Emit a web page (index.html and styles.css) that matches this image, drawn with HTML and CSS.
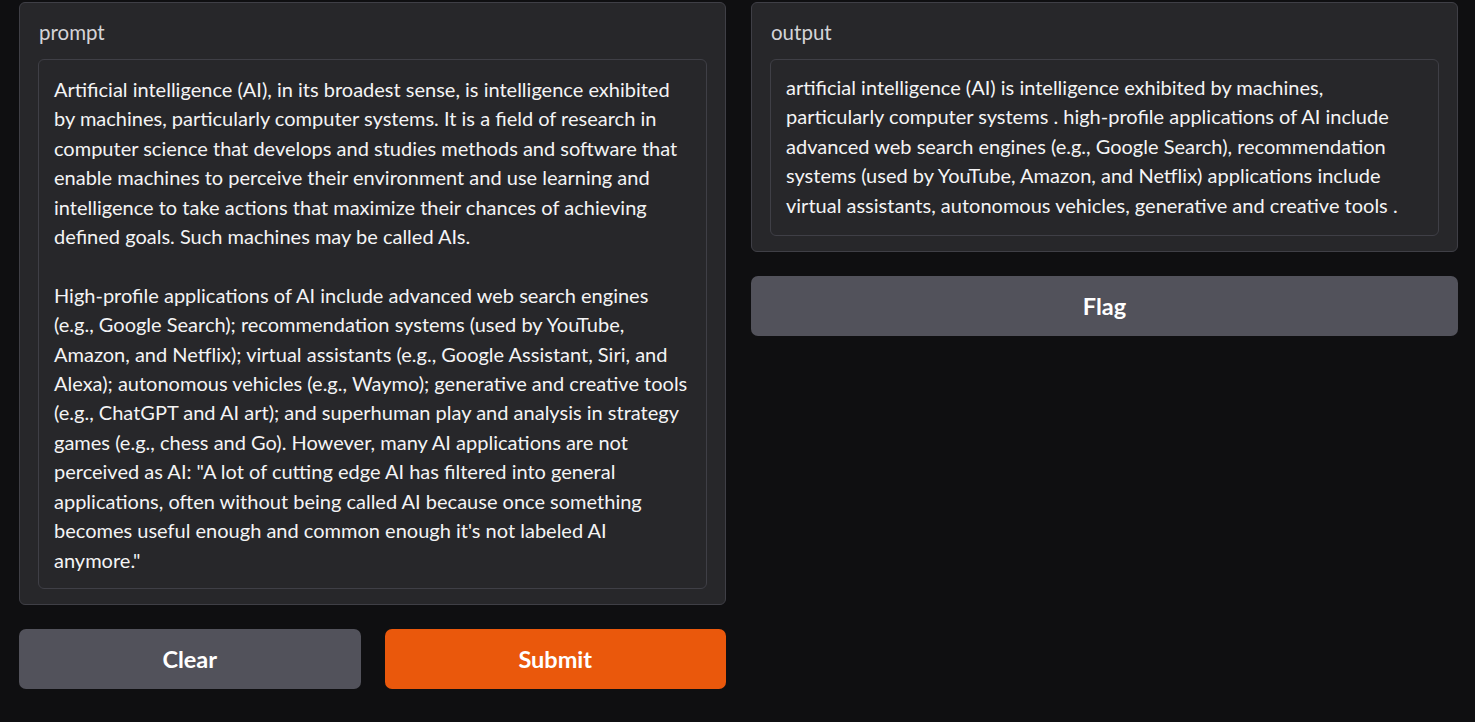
FILE: index.html
```html
<!DOCTYPE html>
<html lang="en">
<head>
<meta charset="utf-8">
<title>Gradio</title>
<link rel="stylesheet" href="styles.css">
</head>
<body>
<main class="app">
  <section class="col">
    <div class="block">
      <label class="label">prompt</label>
      <div class="textbox textbox-prompt">Artificial intelligence (AI), in its broadest sense, is intelligence exhibited
by machines, particularly computer systems. It is a field of research in
computer science that develops and studies methods and software that
enable machines to perceive their environment and use learning and
intelligence to take actions that maximize their chances of achieving
defined goals. Such machines may be called AIs.

High-profile applications of AI include advanced web search engines
(e.g., Google Search); recommendation systems (used by YouTube,
Amazon, and Netflix); virtual assistants (e.g., Google Assistant, Siri, and
Alexa); autonomous vehicles (e.g., Waymo); generative and creative tools
(e.g., ChatGPT and AI art); and superhuman play and analysis in strategy
games (e.g., chess and Go). However, many AI applications are not
perceived as AI: "A lot of cutting edge AI has filtered into general
applications, often without being called AI because once something
becomes useful enough and common enough it's not labeled AI
anymore."</div>
    </div>
    <div class="row">
      <button class="btn btn-secondary">Clear</button>
      <button class="btn btn-primary">Submit</button>
    </div>
  </section>
  <section class="col">
    <div class="block">
      <label class="label">output</label>
      <div class="textbox textbox-output">artificial intelligence (AI) is intelligence exhibited by machines,
particularly computer systems . high-profile applications of AI include
advanced web search engines (e.g., Google Search), recommendation
systems (used by YouTube, Amazon, and Netflix) applications include
virtual assistants, autonomous vehicles, generative and creative tools .</div>
    </div>
    <button class="btn btn-secondary">Flag</button>
  </section>
</main>
</body>
</html>
```

FILE: styles.css
```css
html, body {
  margin: 0;
  padding: 0;
  background: #0f0f11;
}
body {
  font-family: "Lato", "Open Sans", sans-serif;
  color: #f4f4f5;
}
.app {
  display: grid;
  grid-template-columns: 707px 707px;
  column-gap: 25px;
  padding: 2px 17px 0 19px;
  align-items: start;
}
.col {
  display: flex;
  flex-direction: column;
  gap: 24px;
}
.block {
  background: #27272a;
  border: 1px solid #3f3f46;
  border-radius: 6px;
  padding: 16px 18px 15px 18px;
  display: flex;
  flex-direction: column;
}
.label {
  font-size: 20.5px;
  line-height: 26px;
  color: #d4d4d8;
  margin-bottom: 14px;
  padding-left: 1px;
}
.textbox {
  background: #27272a;
  border: 1px solid #3f3f46;
  border-radius: 6px;
  font-size: 20px;
  line-height: 29.4px;
  white-space: pre-wrap;
  color: #f4f4f5;
}
.textbox-prompt {
  padding: 15px 15px 13px 15px;
}
.textbox-output {
  padding: 13px 15px 15px 15px;
}
.row {
  display: flex;
  gap: 24px;
}
.row .btn {
  flex: 1;
}
.btn {
  height: 60px;
  border: none;
  border-radius: 7px;
  font-family: "Lato", "Open Sans", sans-serif;
  font-weight: 700;
  font-size: 23.5px;
  color: #ffffff;
  cursor: pointer;
}
.btn-secondary {
  background: #52525b;
}
.btn-primary {
  background: #ea580c;
}
```
